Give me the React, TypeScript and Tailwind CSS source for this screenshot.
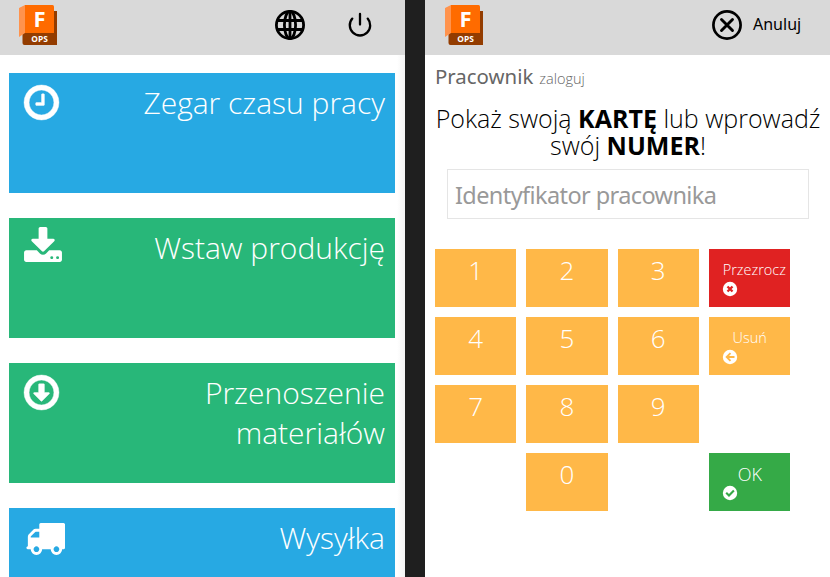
import React from 'react';

const RING =
  'M1440 896q0-148-73-273t-198-198-273-73-273 73-198 198-73 273 73 273 198 198 273 73 273-73 198-198 73-273zm224 0q0 209-103 385.5t-279.5 279.5-385.5 103-385.5-103-279.5-279.5-103-385.5 103-385.5 279.5-279.5 385.5-103 385.5 103 279.5 279.5 103 385.5z';

function ClockIcon() {
  return (
    <svg viewBox="128 128 1536 1536" className="ml-[15px] mt-3 size-[35px] shrink-0 overflow-visible" fill="currentColor" stroke="currentColor" strokeWidth="18">
      <path d="M1024 544v448q0 14-9 23t-23 9h-320q-14 0-23-9t-9-23v-64q0-14 9-23t23-9h224v-352q0-14 9-23t23-9h64q14 0 23 9t9 23z" />
      <path d={RING} />
    </svg>
  );
}

function DownloadIcon() {
  return (
    <svg viewBox="64 0 1664 1536" className="ml-[15px] mt-[9px] h-[35px] w-[38px] shrink-0" fill="currentColor">
      <path d="M1344 1344q0-26-19-45t-45-19-45 19-19 45 19 45 45 19 45-19 19-45zm256 0q0-26-19-45t-45-19-45 19-19 45 19 45 45 19 45-19 19-45zm128-224v320q0 40-28 68t-68 28h-1472q-40 0-68-28t-28-68v-320q0-40 28-68t68-28h465l135 136q58 56 136 56t136-56l136-136h464q40 0 68 28t28 68zm-325-569q17 41-14 70l-448 448q-18 19-45 19t-45-19l-448-448q-31-29-14-70 17-39 59-39h256v-448q0-26 19-45t45-19h256q26 0 45 19t19 45v448h256q42 0 59 39z" />
    </svg>
  );
}

function ArrowDownIcon() {
  return (
    <svg viewBox="128 128 1536 1536" className="ml-[15px] mt-3 size-[35px] shrink-0 overflow-visible" fill="currentColor" stroke="currentColor" strokeWidth="18">
      <path d="M800 512h192q32 0 32 32v352h192q22 0 30 20 6 18-7 34l-320 320q-10 10-23 10t-23-10l-320-320q-13-16-7-34 8-20 30-20h192v-352q0-32 32-32z" />
      <path d={RING} />
    </svg>
  );
}

function TruckIcon() {
  return (
    <svg viewBox="0 256 1792 1408" className="ml-4 mt-[15px] h-8 w-10 shrink-0" preserveAspectRatio="none" fill="currentColor">
      <path d="M640 1408q0-52-38-90t-90-38-90 38-38 90 38 90 90 38 90-38 38-90zm-384-512h384v-256h-158q-13 0-22 9l-195 195q-9 9-9 22v30zm1280 512q0-52-38-90t-90-38-90 38-38 90 38 90 90 38 90-38 38-90zm256-1088v1024q0 15-4 26.5t-13.5 18.5-16.5 11.5-23.5 6-22.5 2-25.5 0-22.5-.5q0 106-75 181t-181 75-181-75-75-181h-384q0 106-75 181t-181 75-181-75-75-181h-64q-3 0-22.5.5t-25.5 0-22.5-2-23.5-6-16.5-11.5-13.5-18.5-4-26.5q0-26 19-45t45-19v-320q0-8-.5-35t0-38 2.5-34.5 6.5-37 14-30.5 22.5-30l198-198q19-19 50.5-32t58.5-13h160v-192q0-26 19-45t45-19h1024q26 0 45 19t19 45z" />
    </svg>
  );
}

function Logo() {
  return (
    <svg viewBox="0 0 38 40" className="h-10 w-[38px] overflow-visible">
      <path d="M32 6h6v34H5.500q-2 0-2-2V28H32z" fill="#933c00" />
      <path d="M35 7.500V28h-3V7.500z" fill="#7a3100" />
      <path d="M0 3l6-3v28l-6 4z" fill="#ff934d" />
      <path d="M6 0h27.500q1.500 0 1.500 1.500V28H6z" fill="#ff6b00" />
      <text x="14.500" y="22" fontSize="22" fontWeight="700" fill="#fff" fontFamily="'Open Sans', sans-serif">F</text>
      <text x="12.300" y="36.800" fontSize="8" fontWeight="700" fill="#fff" textLength="16.500" lengthAdjust="spacingAndGlyphs" fontFamily="'Open Sans', sans-serif">OPS</text>
    </svg>
  );
}

function GlobeIcon() {
  return (
    <svg viewBox="0 0 30 30" className="size-[30px]" fill="none" stroke="#000" strokeWidth="2.800">
      <circle cx="15" cy="15" r="13.600" />
      <ellipse cx="15" cy="15" rx="5.600" ry="13.600" />
      <path d="M15 1.500v27M2.500 10.500h25M2.500 19.500h25" />
    </svg>
  );
}

function PowerIcon() {
  return (
    <svg viewBox="0 0 24 26" className="h-[26px] w-6" fill="none" stroke="#000" strokeWidth="2.300" strokeLinecap="round">
      <path d="M12 3v10.500M4.300 7.600a10.200 10.200 0 1 0 15.400 0" />
    </svg>
  );
}

function CancelIcon() {
  return (
    <svg viewBox="0 0 30 30" className="size-[30px]" fill="none" stroke="#000" strokeLinecap="round">
      <circle cx="15" cy="15" r="13.600" strokeWidth="2.700" />
      <path d="M9.500 9.500l11 11M20.500 9.500l-11 11" strokeWidth="2.900" />
    </svg>
  );
}

const badgeMarks = {
  clear: { d: 'M4.500 4.500l5 5M9.500 4.500l-5 5', color: '#e02222', width: 2.3 },
  back: { d: 'M7.500 3.200L3.700 7l3.800 3.800M4.300 7h7.200', color: '#ffb848', width: 1.9 },
  ok: { d: 'M3.200 6.700l2.800 2.800 4.900-4.900', color: '#35aa47', width: 2.1 },
};

function BadgeIcon({ kind }: { kind: keyof typeof badgeMarks }) {
  const mark = badgeMarks[kind];
  return (
    <svg viewBox="0 0 14 14" className="size-3.5 overflow-visible" fill="none">
      <circle cx="7" cy="7" r="7.200" fill="#fff" />
      <path d={mark.d} stroke={mark.color} strokeWidth={mark.width} />
    </svg>
  );
}

function Tile({ icon, label, color }: { icon: React.ReactNode; label: string; color: string }) {
  return (
    <button className={`flex h-[120px] w-full shrink-0 items-start justify-between pr-2.5 text-white ${color}`}>
      {icon}
      <span className="mt-[10px] w-[260px] text-right text-[30px] font-light leading-10">{label}</span>
    </button>
  );
}

function Key({ label }: { label: string }) {
  return <button className="flex h-[58px] justify-center bg-[#ffb848] pt-[3px] text-[26px] font-light leading-9 text-white">{label}</button>;
}

function ActionKey({ label, kind, color, text }: { label: string; kind: keyof typeof badgeMarks; color: string; text: string }) {
  return (
    <button className={`flex h-[58px] flex-col items-start pl-3.5 pt-2.5 font-light text-white ${color}`}>
      <span className={`mb-px flex h-[22px] min-w-[54px] items-center justify-center ${text}`}>{label}</span>
      <BadgeIcon kind={kind} />
    </button>
  );
}

export default function App() {
  return (
    <div className="flex h-[577px] w-[830px] overflow-hidden bg-[#1f1f1f] font-['Open_Sans',sans-serif]">
      <section className="flex w-[405px] shrink-0 flex-col bg-white bg-[linear-gradient(to_left,#f4f4f4,#ffffff_8px)]">
        <header className="flex h-[55px] shrink-0 items-start bg-[#d9d9d9] pl-[19px] pt-[5px]">
          <Logo />
          <span className="ml-[218px] mt-[5px]"><GlobeIcon /></span>
          <span className="ml-[43px] mt-[6px]"><PowerIcon /></span>
        </header>
        <nav className="flex flex-col gap-[25px] pl-[9px] pr-2.5 pt-[18px]">
          <Tile icon={<ClockIcon />} label="Zegar czasu pracy" color="bg-[#27a9e3]" />
          <Tile icon={<DownloadIcon />} label="Wstaw produkcję" color="bg-[#28b779]" />
          <Tile icon={<ArrowDownIcon />} label="Przenoszenie materiałów" color="bg-[#28b779]" />
          <Tile icon={<TruckIcon />} label="Wysyłka" color="bg-[#27a9e3]" />
        </nav>
      </section>

      <section className="ml-5 flex w-[405px] shrink-0 flex-col bg-white">
        <header className="flex h-[55px] shrink-0 items-start bg-[#d9d9d9] pl-5 pt-[5px]">
          <Logo />
          <button className="ml-[229px] mt-[5px] flex items-center gap-[11px]">
            <CancelIcon />
            <span className="pb-0.5 font-['Noto_Sans',sans-serif] text-base leading-6 text-black">Anuluj</span>
          </button>
        </header>
        <h1 className="mt-[7px] flex h-7 items-baseline gap-1.5 pl-2.5 font-['Noto_Sans',sans-serif] text-[20.4px] leading-7 text-[#666]">
          Pracownik <small className="font-['Open_Sans',sans-serif] text-[14.5px] font-light text-[#666]">zaloguj</small>
        </h1>
        <p className="mt-[15px] pl-px text-center text-[25px] font-light leading-[27px] text-black">
          <span className="block whitespace-nowrap">Pokaż swoją <b className="font-bold">KARTĘ</b> lub wprowadź</span>
          <span className="block">swój <b className="font-bold">NUMER</b>!</span>
        </p>
        <input
          className="ml-[22px] mt-[10px] h-[50px] w-[362px] shrink-0 border border-[#e5e5e5] bg-white px-[7px] pt-0.5 font-['Noto_Sans',sans-serif] text-[23.5px] tracking-[-0.6px] placeholder:text-[#999]"
          placeholder="Identyfikator pracownika"
        />
        <div className="ml-2.5 mt-[30px] grid w-[355px] grid-cols-4 gap-2.5">
          <Key label="1" />
          <Key label="2" />
          <Key label="3" />
          <ActionKey label="Przezrocz" kind="clear" color="bg-[#e02222]" text="text-[14.500px]" />
          <Key label="4" />
          <Key label="5" />
          <Key label="6" />
          <ActionKey label="Usuń" kind="back" color="bg-[#ffb848]" text="text-[14.500px]" />
          <Key label="7" />
          <Key label="8" />
          <Key label="9" />
          <span />
          <span />
          <Key label="0" />
          <span />
          <ActionKey label="OK" kind="ok" color="bg-[#35aa47]" text="text-lg" />
        </div>
      </section>
    </div>
  );
}
